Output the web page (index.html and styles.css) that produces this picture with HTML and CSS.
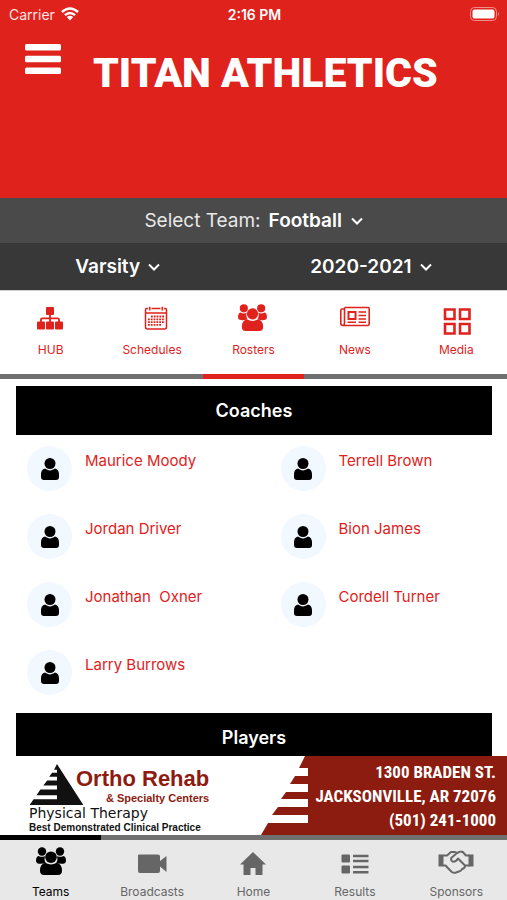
FILE: index.html
```html
<!DOCTYPE html>
<html lang="en">
<head>
<meta charset="utf-8">
<meta name="viewport" content="width=device-width, initial-scale=1">
<title>Titan Athletics</title>
<link rel="stylesheet" href="styles.css">
</head>
<body>
<svg class="symbols" aria-hidden="true">
  <symbol id="person" viewBox="0 0 20 24">
    <path d="M1 17.500C1 14.500 2.200 12.200 5 11.600C8.200 14 11.800 14 15 11.600C17.800 12.200 19 14.500 19 17.500V20Q19 23 16 23H4Q1 23 1 20Z"/><circle cx="10" cy="6.500" r="5.500"/>
  </symbol>
  <symbol id="group" viewBox="0 0 30 28">
    <circle cx="6" cy="4.500" r="4.200"/><circle cx="24" cy="4.500" r="4.200"/>
    <path d="M2.500 8.900Q6 10.800 9 8.900Q7.800 13 9.800 15.800Q7 17 3 16.700Q0 16.500 0 13.500Q0 9.700 2.500 8.900ZM27.500 8.900Q24 10.800 21 8.900Q22.200 13 20.200 15.800Q23 17 27 16.700Q30 16.500 30 13.500Q30 9.700 27.500 8.900Z"/>
    <circle cx="15" cy="10.200" r="5.800"/>
    <path d="M9.300 15.800Q15 19.200 20.700 15.800Q26.200 17 26 24Q25.800 28 22 28H8Q4.200 28 4 24Q3.800 17 9.300 15.800Z"/>
  </symbol>
</svg>

<header class="header">
  <div class="status">
    <span class="carrier">Carrier
      <svg class="wifi" viewBox="0 0 18 14" aria-hidden="true"><g fill="none" stroke="currentColor" stroke-width="2.400"><path d="M.9 5Q9-2.200 17.100 5"/><path d="M3.900 8.200Q9 3.700 14.100 8.200"/></g><path d="M5.800 10.100Q9 7.500 12.200 10.100L9 13.500Z" fill="currentColor"/></svg>
    </span>
    <span class="clock">2:16 PM</span>
    <svg class="battery" viewBox="0 0 30 14" aria-hidden="true"><rect x=".5" y=".5" width="26" height="13" rx="4" fill="none" stroke="#f0908b"/><rect x="2.500" y="2.500" width="22" height="9" rx="2" fill="#fff"/><path d="M28 5Q30 7 28 9Z" fill="#f0908b"/></svg>
  </div>
  <div class="brand">
    <button class="menu" aria-label="Menu"><svg viewBox="0 0 36 30" aria-hidden="true"><path d="M1.500 0H34.500Q36 0 36 1.500V5Q36 6.500 34.500 6.500H1.500Q0 6.500 0 5V1.500Q0 0 1.500 0ZM1.500 11.800H34.500Q36 11.800 36 13.300V16.800Q36 18.300 34.500 18.300H1.500Q0 18.300 0 16.800V13.300Q0 11.800 1.500 11.800ZM1.500 23.500H34.500Q36 23.500 36 25V28.500Q36 30 34.500 30H1.500Q0 30 0 28.500V25Q0 23.500 1.500 23.500Z"/></svg></button>
    <h1>TITAN ATHLETICS</h1>
  </div>
</header>

<div class="picker team">
  <label for="team">Select Team:</label>
  <span class="drop"><select id="team"><option>Football</option></select><svg viewBox="0 0 12 8" aria-hidden="true"><path d="M1 1.500L6 6.500L11 1.500"/></svg></span>
</div>
<div class="picker split">
  <span class="drop"><select aria-label="Level"><option>Varsity</option></select><svg viewBox="0 0 12 8" aria-hidden="true"><path d="M1 1.500L6 6.500L11 1.500"/></svg></span>
  <span class="drop"><select aria-label="Season"><option>2020-2021</option></select><svg viewBox="0 0 12 8" aria-hidden="true"><path d="M1 1.500L6 6.500L11 1.500"/></svg></span>
</div>

<nav class="tabs" aria-label="Team sections">
  <a href="#hub"><svg viewBox="0 0 30 30" aria-hidden="true"><rect x="10" y="4" width="8" height="8" rx="1"/><rect x="1" y="18.500" width="8" height="8" rx="1"/><rect x="10" y="18.500" width="8" height="8" rx="1"/><rect x="19" y="18.500" width="8" height="8" rx="1"/><path d="M14 10V20M5 20V16.500Q5 15.300 6.200 15.300H21.800Q23 15.300 23 16.500V20" fill="none" stroke="currentColor" stroke-width="1.800"/></svg>HUB</a>
  <a href="#schedules"><svg viewBox="0 0 30 30" aria-hidden="true"><g fill="none" stroke="currentColor" transform="translate(4 0)"><path d="M7 5.500H5.500Q4.500 5.500 4.500 7V24Q4.500 26 6.500 26H23.500Q25.500 26 25.500 24V7Q25.500 5.500 24.500 5.500H23M10.500 5.500H19.500M4.500 10H25.500" stroke-width="1.500"/><path d="M8.700 3.800V7.500M21.300 3.800V7.500" stroke-width="1.600"/><path d="M10 13.500H24M7 16.300H24M7 19.100H24M7 21.900H20" stroke-width="1.800" stroke-dasharray="1.800 1"/></g></svg>Schedules</a>
  <a href="#rosters" class="active" aria-current="page"><svg viewBox="0 0 30 30" aria-hidden="true"><use href="#group" x="0" y="1" width="29" height="27"/></svg>Rosters</a>
  <a href="#news"><svg viewBox="0 0 30 30" aria-hidden="true"><g fill="none" stroke="currentColor" stroke-width="1.600"><path d="M4.500 4.500H28Q29.200 4.500 29.200 6V20.500Q29.200 22.500 27.500 22.500H3Q.8 22.500.8 20V7.500Q.8 6 2.300 6H4.500M4.500 4.500V20Q4.500 22 3 22.500"/><path d="M8.500 9H15.500V16H8.500Z" stroke-width="2"/><path d="M18.500 9H26M18.500 12.500H26M18.500 16H26M7.500 19.300H16M18.500 19.300H26"/></g></svg>News</a>
  <a href="#media"><svg viewBox="0 0 30 30" aria-hidden="true"><path d="M4 6.500H13.500V16H4ZM19 6.500H28.500V16H19ZM4 21H13.500V30.500H4ZM19 21H28.500V30.500H19Z" fill="none" stroke="currentColor" stroke-width="2.600"/></svg>Media</a>
</nav>

<main class="content">
  <h2>Coaches</h2>
  <ul class="people">
    <li><span class="avatar"><svg aria-hidden="true"><use href="#person"/></svg></span><a href="#p1">Maurice Moody</a></li>
    <li><span class="avatar"><svg aria-hidden="true"><use href="#person"/></svg></span><a href="#p2">Terrell Brown</a></li>
    <li><span class="avatar"><svg aria-hidden="true"><use href="#person"/></svg></span><a href="#p3">Jordan Driver</a></li>
    <li><span class="avatar"><svg aria-hidden="true"><use href="#person"/></svg></span><a href="#p4">Bion James</a></li>
    <li><span class="avatar"><svg aria-hidden="true"><use href="#person"/></svg></span><a href="#p5">Jonathan&nbsp; Oxner</a></li>
    <li><span class="avatar"><svg aria-hidden="true"><use href="#person"/></svg></span><a href="#p6">Cordell Turner</a></li>
    <li><span class="avatar"><svg aria-hidden="true"><use href="#person"/></svg></span><a href="#p7">Larry Burrows</a></li>
  </ul>
  <h2>Players</h2>
</main>

<footer class="footer">
  <a class="banner" href="#sponsor">
    <span class="ortho">
      <span class="ortho-top">
        <svg viewBox="0 0 55 42" aria-hidden="true"><path d="M28 0L55 42H0L4 36H28V32H7L11 26H28V22H14L18 17H28V13H20L23 9H28V6H25Z"/></svg>
        <span class="ortho-name"><strong>Ortho Rehab</strong><b>&amp; Specialty Centers</b></span>
      </span>
      <span class="therapy">Physical Therapy</span>
      <span class="motto">Best Demonstrated Clinical Practice</span>
    </span>
    <svg class="steps" viewBox="0 0 48 79" aria-hidden="true"><path d="M44 0H48V79H0L7 67H47V59H11L17 51H47V43H20L25 36H47V28H29L34 20H47V12H38Z"/></svg>
    <span class="address">1300 BRADEN ST.<br>JACKSONVILLE, AR 72076<br>(501) 241-1000</span>
  </a>
  <nav class="bottom" aria-label="Main">
    <a href="#teams" class="active" aria-current="page"><svg viewBox="0 0 36 30" aria-hidden="true"><use href="#group" x="3" y="2" width="30" height="28"/></svg>Teams</a>
    <a href="#broadcasts"><svg viewBox="0 0 36 30" aria-hidden="true"><path d="M5 9.500H24Q26 9.500 26 11.500V16L32.500 11V27L26 21.500V26Q26 28 24 28H6Q4 28 4 26V10.500Q4 9.500 5 9.500Z"/></svg>Broadcasts</a>
    <a href="#home"><svg viewBox="0 0 36 30" aria-hidden="true"><path d="M18 7L31 19.500H27.500V30H20.500V23H15.500V30H8.500V19.500H5Z"/></svg>Home</a>
    <a href="#results"><svg viewBox="0 0 36 30" aria-hidden="true"><rect x="4.500" y="9.500" width="8.500" height="8" rx="1"/><rect x="4.500" y="20.500" width="8.500" height="8" rx="1"/><path d="M16 11H31.500M16 16H31.500M16 22H31.500M16 27.200H31.500" stroke="currentColor" stroke-width="2.600"/></svg>Results</a>
    <a href="#sponsors"><svg viewBox="0 0 36 30" aria-hidden="true"><path d="M.5 9.500H5.500V21.500H.5ZM30.500 9.500H35.500V21.500H30.500Z"/><g fill="none" stroke="currentColor" stroke-width="2" stroke-linejoin="round" stroke-linecap="round"><path d="M5.500 10.500H9L13 7H16.500L19 8L22 6.700H24.500L28 10.500H31M5.500 20.500H7.500L13.500 26.700Q16 28.500 18.500 27.300L21 26.500Q23.500 26 24 24Q27 23.500 27 20.500H31M19 8L13.200 13Q12.800 16.500 15.500 16.800Q18 16.800 20 13.500L27 20.500"/></g></svg>Sponsors</a>
  </nav>
</footer>
</body>
</html>
```
FILE: styles.css
```css
* { box-sizing: border-box; }

body {
  margin: 0;
  height: 100vh;
  display: flex;
  flex-direction: column;
  background: #fff;
  font-family: Inter, "Liberation Sans", sans-serif;
}

a { color: inherit; text-decoration: none; }
svg { fill: currentColor; }
.symbols { display: none; }

.header {
  flex: none;
  height: 198px;
  background: #df221c;
  color: #fff;
}

.status {
  display: grid;
  grid-template-columns: 1fr auto 1fr;
  align-items: center;
  height: 28px;
  padding: 0 7px 0 9px;
  font-size: 14px;
}

.carrier { display: flex; align-items: center; gap: 6px; color: #ffe4e2; }
.wifi { width: 18px; height: 14px; color: #fff; }
.clock { font-weight: 600; }
.battery { width: 30px; height: 14px; justify-self: end; }

.brand { display: flex; gap: 32px; padding: 15px 25px; }

.menu {
  width: 36px;
  height: 32px;
  padding: 0;
  border: 0;
  background: none;
  color: #fff;
}

.menu svg { display: block; width: 36px; height: 30px; }

.brand h1 {
  margin: 8px 0 0;
  font-family: Roboto, "Liberation Sans", sans-serif;
  font-size: 41px;
  line-height: 44px;
  font-weight: 900;
  white-space: nowrap;
}

.picker {
  flex: none;
  display: flex;
  justify-content: center;
  align-items: center;
  color: #fff;
  font-size: 19px;
}

.team { height: 45px; gap: 8px; background: #4a4a4a; }
.team label { color: #e8e8e8; }
.split { height: 48px; background: #383838; border-bottom: 1px solid #d0d0d0; }
.split .drop { flex: 1; justify-content: center; padding-right: 18px; }
.drop { display: flex; align-items: center; gap: 8px; }
.drop svg { width: 12px; height: 8px; fill: none; stroke: #fff; stroke-width: 2; }

.drop select {
  appearance: none;
  padding: 0;
  border: 0;
  background: none;
  color: #fff;
  font: inherit;
  font-weight: 600;
}

.tabs, .bottom { display: grid; grid-template-columns: repeat(5, 1fr); }

.tabs {
  flex: none;
  height: 88px;
  color: #df221c;
  font-size: 12px;
}

.tabs a {
  display: flex;
  flex-direction: column;
  align-items: center;
  gap: 9px;
  padding-top: 12px;
  border-bottom: 5px solid #707070;
  line-height: 16px;
}

.tabs a.active { border-bottom-color: #df221c; }
.tabs svg { width: 30px; height: 30px; overflow: visible; }

.content {
  flex: 1;
  min-height: 0;
  overflow: hidden;
  padding-top: 7px;
}

.content h2 {
  margin: 0 15px 0 16px;
  background: #000;
  color: #fff;
  font-size: 18px;
  line-height: 49px;
  font-weight: 600;
  text-align: center;
}

.people {
  display: grid;
  grid-template-columns: 1fr 1fr;
  grid-auto-rows: 68px;
  margin: 0;
  padding: 11px 0 0;
  list-style: none;
  color: #df221c;
  font-size: 15px;
  line-height: 20px;
}

.people + h2 { margin-top: -5px; }
.people li { display: flex; gap: 13px; padding-left: 27px; }
.people a { padding-top: 5px; }

.avatar {
  display: grid;
  place-items: center;
  width: 45px;
  height: 45px;
  border-radius: 50%;
  background: #f2f8ff;
  color: #000;
}

.avatar svg { width: 20px; height: 24px; }

.footer { flex: none; }

.banner {
  display: flex;
  height: 79px;
  background: #fff;
  overflow: hidden;
}

.ortho {
  flex: 1;
  display: flex;
  flex-direction: column;
  padding: 8px 0 0 29px;
  color: #111;
  white-space: nowrap;
}

.ortho-top { display: flex; height: 41px; }
.ortho-top svg { flex: none; width: 55px; height: 41px; }

.ortho-name {
  display: flex;
  flex-direction: column;
  align-items: flex-end;
  margin-left: -8px;
  padding-top: 2px;
  color: #8e1a10;
  font-family: "Liberation Sans", sans-serif;
}

.ortho-name strong { font-size: 22px; line-height: 26px; }
.ortho-name b { font-size: 11px; line-height: 13px; }
.therapy { font-family: "DejaVu Sans", sans-serif; font-size: 14px; line-height: 17px; }
.motto { font-family: "Liberation Sans", sans-serif; font-size: 10px; line-height: 12px; font-weight: 700; }
.steps { flex: none; width: 48px; height: 79px; color: #8c1c10; }

.address {
  flex: none;
  padding: 4px 11px 0 6px;
  background: #8c1c10;
  color: #fff;
  font-family: "Liberation Sans Narrow", "Roboto Condensed", "Liberation Sans", sans-serif;
  font-size: 17px;
  line-height: 24px;
  font-weight: 700;
  text-align: right;
  white-space: nowrap;
}

.bottom {
  height: 65px;
  background: #e8e8e8;
  color: #666;
  font-size: 12px;
}

.bottom a {
  display: flex;
  flex-direction: column;
  align-items: center;
  gap: 9px;
  padding-top: 5px;
  border-top: 5px solid #707070;
  line-height: 16px;
}

.bottom a.active { border-top-color: #000; color: #000; }
.bottom svg { width: 36px; height: 30px; }
```
